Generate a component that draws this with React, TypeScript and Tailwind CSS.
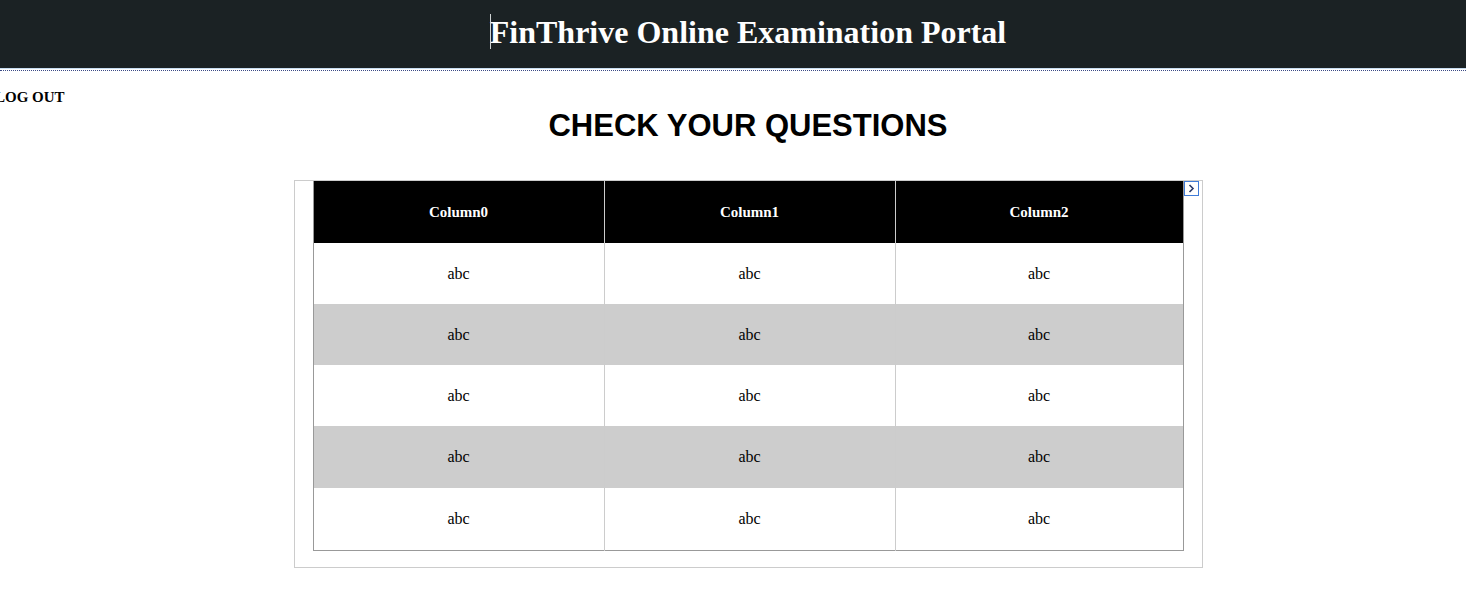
export default function App() {
  const cols = ["Column0", "Column1", "Column2"];
  const rowHeights = ["h-[61px]", "h-[61px]", "h-[61px]", "h-[62px]", "h-[62px]"];
  const widths = ["w-[291px]", "w-[291px]", "w-[288px]"];

  return (
    <div className="min-h-screen bg-white font-['Liberation_Serif',serif] text-black">
      <header className="h-[68px] bg-[#1b2224] flex items-center justify-center pl-[30px]">
        <h1 className="relative text-[32px] font-bold text-white leading-[37px] mt-[-4px]">
          <span className="absolute left-0 top-0 h-[35px] border-l border-[#cfd3d4]" />
          FinThrive Online Examination Portal
        </h1>
      </header>
      <div className="h-px bg-[#c6dcf0]" />
      <div className="h-px" />
      <div className="border-t border-dotted border-[#3b4a86]" />

      <div className="mt-[17px] ml-[-5px] text-[15px] font-bold leading-[18px]">LOG OUT</div>

      <h2 className="mt-[2px] pl-[30px] text-center font-['Liberation_Sans',Arial,sans-serif] text-[31px] font-bold leading-[36px]">
        CHECK YOUR QUESTIONS
      </h2>

      <div className="mt-[36px] pl-[30px] flex justify-center">
        <div className="relative w-[909px] h-[388px] border border-[#cccccc] pl-[18px] pb-[16px]">
          <table className="border-collapse border border-t-0 border-[#999999] text-center">
            <thead>
              <tr className="h-[62px] bg-black text-white">
                {cols.map((c, i) => (
                  <th
                    key={c}
                    className={`${widths[i]} p-0 text-[15px] font-bold ${i > 0 ? "border-l border-[#cccccc]" : ""}`}
                  >
                    {c}
                  </th>
                ))}
              </tr>
            </thead>
            <tbody>
              {rowHeights.map((h, r) => (
                <tr key={r} className={`${h} ${r % 2 === 1 ? "bg-[#cdcdcd]" : "bg-white"}`}>
                  {cols.map((c, i) => (
                    <td
                      key={c}
                      className={`p-0 text-[16px] ${i > 0 ? "border-l border-[#cccccc]" : ""}`}
                    >
                      abc
                    </td>
                  ))}
                </tr>
              ))}
            </tbody>
          </table>
          <button className="absolute left-[889px] top-0 w-[15px] h-[15px] border border-[#3f7bd8] bg-white flex items-center justify-center p-0">
            <svg width="7" height="9" viewBox="0 0 7 9">
              <path d="M1.5 1 L5 4.5 L1.5 8" fill="none" stroke="#2a3a6a" strokeWidth="1.6" />
            </svg>
          </button>
        </div>
      </div>
    </div>
  );
}
